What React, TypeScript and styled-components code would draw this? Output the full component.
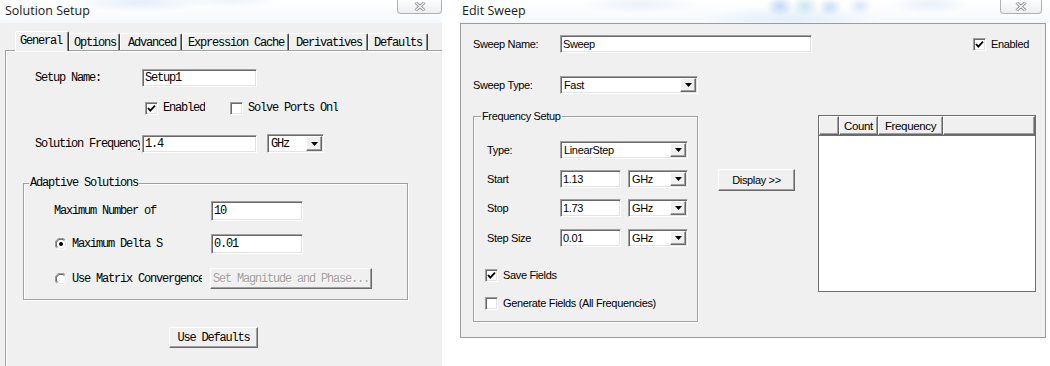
import React from "react";
import styled, { createGlobalStyle, css } from "styled-components";

const GlobalStyle = createGlobalStyle`
  html, body { margin: 0; padding: 0; background: #fff; }
  #root { width: 1050px; height: 366px; overflow: hidden; }
  * { box-sizing: border-box; }
`;

// classic 3D edges
const raised = css`
  border: 1px solid;
  border-color: #fff #696969 #696969 #fff;
  box-shadow: inset -1px -1px 0 #a0a0a0;
`;

const sunken = css`
  border: 1px solid;
  border-color: #a0a0a0 #fff #fff #a0a0a0;
  box-shadow: inset 1px 1px 0 #696969, inset -1px -1px 0 #e3e3e3;
`;

const Screen = styled.div`
  display: flex;
  width: 1050px;
  height: 366px;
  background: #fff;
`;

const Window = styled.div<{ $width: number; $offset?: number }>`
  width: ${(p) => p.$width}px;
  margin-left: ${(p) => p.$offset || 0}px;
  flex-shrink: 0;
  display: flex;
  flex-direction: column;
`;

const TitleBar = styled.div<{ $pad: number; $right: number; $glow: string }>`
  height: 23px;
  display: flex;
  align-items: flex-start;
  padding-left: ${(p) => p.$pad}px;
  padding-right: ${(p) => p.$right}px;
  background: ${(p) => p.$glow}, linear-gradient(#ffffff, #f6f9fc);
  font-family: "Open Sans", "Liberation Sans", sans-serif;
  font-size: 12.5px;
`;

const TitleText = styled.div`
  margin-top: 2px;
  line-height: 17px;
  color: #1b1b1b;
`;

const CloseButton = styled.div<{ $width: number }>`
  margin-left: auto;
  width: ${(p) => p.$width}px;
  height: 14px;
  border: 1px solid #aeb1b5;
  border-top: none;
  border-radius: 0 0 4px 4px;
  background: linear-gradient(#fdfdfd, #eceef0);
  display: flex;
  align-items: center;
  justify-content: center;
`;

/* ---------- Solution Setup ---------- */

const SetupBody = styled.div`
  height: 343px;
  background: #f0f0f0;
  display: flex;
  flex-direction: column;
  font-family: "Liberation Mono", "Noto Sans CJK SC", monospace;
  font-size: 12px;
  letter-spacing: -1.2px;
  color: #000;
`;

const TabStrip = styled.div`
  display: flex;
  align-items: flex-start;
  height: 22px;
  margin-top: 6px;
  margin-bottom: -1px;
  padding-left: 15px;
  position: relative;
  z-index: 1;
`;

const Tab = styled.div<{ $active?: boolean; $width: number; $pad: number }>`
  width: ${(p) => p.$width}px;
  height: ${(p) => (p.$active ? 20 : 17)}px;
  margin-top: ${(p) => (p.$active ? 2 : 4)}px;
  padding-left: ${(p) => p.$pad}px;
  padding-top: 3px;
  line-height: 13px;
  white-space: nowrap;
  background: #f0f0f0;
  border-top: 1px solid #fff;
  border-left: 1px solid #fff;
  border-right: 1px solid #3c3c3c;
  border-radius: 2px 2px 0 0;
  box-shadow: inset -1px 0 0 #8a8a8a;
`;

const Pane = styled.div`
  flex: 1;
  margin-left: 5px;
  border-top: 1px solid #a0a0a0;
  border-left: 1px solid #a0a0a0;
  box-shadow: inset 1px 1px 0 #fff;
  display: flex;
  flex-direction: column;
`;

const Row = styled.div<{ $top: number; $left: number }>`
  display: flex;
  align-items: center;
  margin-top: ${(p) => p.$top}px;
  padding-left: ${(p) => p.$left}px;
`;

const Label = styled.div<{ $width: number }>`
  width: ${(p) => p.$width}px;
  flex-shrink: 0;
  white-space: nowrap;
  overflow: hidden;
  line-height: 14px;
`;

const Field = styled.div<{ $width: number; $height: number; $gap?: number }>`
  ${sunken};
  width: ${(p) => p.$width}px;
  height: ${(p) => p.$height}px;
  margin-left: ${(p) => p.$gap || 0}px;
  background: #fff;
  padding: 0 2px;
  display: flex;
  align-items: center;
  white-space: nowrap;
  overflow: hidden;
  flex-shrink: 0;
`;

const Combo = styled.div<{ $width: number; $height: number; $gap?: number }>`
  ${sunken};
  width: ${(p) => p.$width}px;
  height: ${(p) => p.$height}px;
  margin-left: ${(p) => p.$gap || 0}px;
  background: #fff;
  padding: 1px;
  display: flex;
  flex-shrink: 0;
`;

const ComboText = styled.div`
  flex: 1;
  padding-left: 2px;
  display: flex;
  align-items: center;
  white-space: nowrap;
  overflow: hidden;
`;

const DropButton = styled.div`
  ${raised};
  width: 16px;
  background: #f0f0f0;
  display: flex;
  align-items: center;
  justify-content: center;
`;

const CheckItem = styled.div<{ $gap?: number }>`
  display: flex;
  align-items: center;
  margin-left: ${(p) => p.$gap || 0}px;
`;

const CheckBoxBox = styled.span`
  ${sunken};
  width: 13px;
  height: 13px;
  flex-shrink: 0;
  background: #fff;
  display: flex;
  align-items: center;
  justify-content: center;
`;

const CheckText = styled.span<{ $width?: number }>`
  margin-left: 5px;
  white-space: nowrap;
  overflow: hidden;
  line-height: 14px;
  flex-shrink: 0;
  ${(p) => (p.$width ? `width: ${p.$width}px;` : "")}
`;

const GroupBox = styled.fieldset<{ $left: number; $width: number }>`
  margin: 0 0 0 ${(p) => p.$left}px;
  padding: 0;
  width: ${(p) => p.$width}px;
  min-width: 0;
  border: 1px solid #a0a0a0;
  box-shadow: inset 1px 1px 0 #fff, 1px 1px 0 #fff;
`;

const Legend = styled.legend<{ $left: number }>`
  margin-left: ${(p) => p.$left}px;
  padding: 0 1px;
  line-height: 14px;
`;

const Radio = styled.span`
  width: 12px;
  height: 12px;
  flex-shrink: 0;
  display: flex;
`;

const Button = styled.div<{ $width: number; $height: number; $gap?: number; $disabled?: boolean }>`
  ${raised};
  width: ${(p) => p.$width}px;
  height: ${(p) => p.$height}px;
  margin-left: ${(p) => p.$gap || 0}px;
  background: #f0f0f0;
  display: flex;
  align-items: center;
  justify-content: center;
  white-space: nowrap;
  flex-shrink: 0;
  color: ${(p) => (p.$disabled ? "#a0a0a0" : "#000")};
  text-shadow: ${(p) => (p.$disabled ? "1px 1px 0 #fff" : "none")};
`;

/* ---------- Edit Sweep ---------- */

const SweepBody = styled.div`
  width: 586px;
  height: 315px;
  background: #f0f0f0;
  border: 1px solid #9c9c9c;
  display: flex;
  flex-direction: column;
  font-family: "Liberation Sans", Arial, sans-serif;
  font-size: 11px;
  letter-spacing: -0.35px;
  color: #000;
`;

const Lower = styled.div`
  display: flex;
  align-items: flex-start;
  margin-top: 15px;
`;

const Column = styled.div`
  display: flex;
  flex-direction: column;
  padding-bottom: 11px;
`;

const ListView = styled.div`
  width: 218px;
  height: 177px;
  margin: 6px 0 0 23px;
  border: 1px solid #6e6e6e;
  background: #fff;
  display: flex;
  flex-direction: column;
`;

const ListHeader = styled.div`
  display: flex;
  height: 20px;
  border-bottom: 1px solid #6e6e6e;
`;

const HeaderCell = styled.div<{ $width?: number }>`
  ${raised};
  ${(p) => (p.$width ? `width: ${p.$width}px;` : "flex: 1;")}
  background: #f0f0f0;
  display: flex;
  align-items: center;
  justify-content: center;
  font-size: 11.5px;
`;

/* ---------- small drawings ---------- */

const CloseGlyph = () => (
  <svg width="12" height="9" viewBox="0 0 12 9">
    <path d="M1.5 0.5 L10.5 8.5 M10.5 0.5 L1.5 8.5" stroke="#7f8388" strokeWidth="3" />
    <path d="M1.5 0.5 L10.5 8.5 M10.5 0.5 L1.5 8.5" stroke="#fdfdfd" strokeWidth="1.2" />
  </svg>
);

const Arrow = () => (
  <svg width="7" height="4" viewBox="0 0 7 4">
    <polygon points="0,0 7,0 3.5,4" fill="#000" />
  </svg>
);

const Check: React.FC<{ checked?: boolean; label: string; gap?: number; width?: number }> = ({
  checked,
  label,
  gap,
  width,
}) => (
  <CheckItem $gap={gap}>
    <CheckBoxBox>
      {checked && (
        <svg width="9" height="9" viewBox="0 0 9 9">
          <polyline points="1,4 3.3,6.6 8,1.6" fill="none" stroke="#000" strokeWidth="1.8" />
        </svg>
      )}
    </CheckBoxBox>
    <CheckText $width={width}>{label}</CheckText>
  </CheckItem>
);

const RadioDot: React.FC<{ checked?: boolean }> = ({ checked }) => (
  <Radio>
    <svg width="12" height="12" viewBox="0 0 12 12">
      <circle cx="6" cy="6" r="5.5" fill="#fff" />
      <path d="M1.8 10.2 A5.9 5.9 0 0 1 10.2 1.8" fill="none" stroke="#8a8a8a" strokeWidth="1" />
      <path d="M2.6 9.4 A4.8 4.8 0 0 1 9.4 2.6" fill="none" stroke="#4a4a4a" strokeWidth="1" />
      <path d="M10.2 1.8 A5.9 5.9 0 0 1 1.8 10.2" fill="none" stroke="#ffffff" strokeWidth="1" />
      <path d="M9.4 2.6 A4.8 4.8 0 0 1 2.6 9.4" fill="none" stroke="#e3e3e3" strokeWidth="1" />
      {checked && <circle cx="6" cy="6" r="2" fill="#000" />}
    </svg>
  </Radio>
);

const Select: React.FC<{ value: string; width: number; height: number; gap?: number }> = ({
  value,
  width,
  height,
  gap,
}) => (
  <Combo $width={width} $height={height} $gap={gap}>
    <ComboText>{value}</ComboText>
    <DropButton>
      <Arrow />
    </DropButton>
  </Combo>
);

const tabs = [
  { label: "General", width: 54, pad: 4, active: true },
  { label: "Options", width: 51, pad: 4 },
  { label: "Advanced", width: 62, pad: 7 },
  { label: "Expression Cache", width: 107, pad: 5 },
  { label: "Derivatives", width: 79, pad: 6 },
  { label: "Defaults", width: 60, pad: 5 },
];

const leftGlow =
  "radial-gradient(ellipse 70px 10px at 140px 2px, rgba(110,160,225,0.18), transparent)," +
  "radial-gradient(ellipse 50px 8px at 230px 0px, rgba(110,160,225,0.12), transparent)";

const rightGlow =
  "radial-gradient(ellipse 14px 10px at 320px 6px, rgba(70,130,220,0.3), transparent)," +
  "radial-gradient(ellipse 14px 10px at 345px 6px, rgba(80,170,200,0.28), transparent)," +
  "radial-gradient(ellipse 12px 9px at 370px 7px, rgba(70,140,220,0.28), transparent)," +
  "radial-gradient(ellipse 12px 9px at 400px 6px, rgba(90,150,225,0.22), transparent)," +
  "radial-gradient(ellipse 90px 12px at 330px 18px, rgba(120,170,230,0.16), transparent)," +
  "radial-gradient(ellipse 60px 10px at 180px 4px, rgba(120,170,230,0.14), transparent)," +
  "radial-gradient(ellipse 40px 10px at 470px 4px, rgba(120,170,230,0.16), transparent)";

const SolutionSetup = () => (
  <Window $width={442}>
    <TitleBar $pad={5} $right={0} $glow={leftGlow}>
      <TitleText>Solution Setup</TitleText>
      <CloseButton $width={45}>
        <CloseGlyph />
      </CloseButton>
    </TitleBar>
    <SetupBody>
      <TabStrip>
        {tabs.map((t) => (
          <Tab key={t.label} $active={t.active} $width={t.width} $pad={t.pad}>
            {t.label}
          </Tab>
        ))}
      </TabStrip>
      <Pane>
        <Row $top={18} $left={29}>
          <Label $width={107}>Setup Name:</Label>
          <Field $width={115} $height={18}>Setup1</Field>
        </Row>
        <Row $top={14} $left={139}>
          <Check checked label="Enabled" />
          <Check label="Solve Ports Only" gap={25} width={90} />
        </Row>
        <Row $top={19} $left={29}>
          <Label $width={105}>Solution Frequency</Label>
          <Field $width={115} $height={18} $gap={2}>1.4</Field>
          <Select value="GHz" width={57} height={19} gap={10} />
        </Row>
        <Row $top={23} $left={0}>
          <GroupBox $left={17} $width={385}>
            <Legend $left={5}>Adaptive Solutions</Legend>
            <Row $top={11} $left={30}>
              <Label $width={157}>Maximum Number of</Label>
              <Field $width={92} $height={20}>10</Field>
            </Row>
            <Row $top={13} $left={31}>
              <RadioDot checked />
              <CheckText $width={139}>Maximum Delta S</CheckText>
              <Field $width={92} $height={20}>0.01</Field>
            </Row>
            <Row $top={14} $left={31}>
              <RadioDot />
              <CheckText $width={130}>Use Matrix Convergence</CheckText>
              <Button $width={162} $height={21} $gap={8} $disabled>
                Set Magnitude and Phase...
              </Button>
            </Row>
            <Row $top={10} $left={0} />
          </GroupBox>
        </Row>
        <Row $top={27} $left={163}>
          <Button $width={89} $height={21}>Use Defaults</Button>
        </Row>
      </Pane>
    </SetupBody>
  </Window>
);

const EditSweep = () => (
  <Window $width={590} $offset={18}>
    <TitleBar $pad={2} $right={8} $glow={rightGlow}>
      <TitleText>Edit Sweep</TitleText>
      <CloseButton $width={42}>
        <CloseGlyph />
      </CloseButton>
    </TitleBar>
    <SweepBody>
      <Row $top={11} $left={12}>
        <Label $width={87}>Sweep Name:</Label>
        <Field $width={252} $height={18}>Sweep</Field>
        <Check checked label="Enabled" gap={161} />
      </Row>
      <Row $top={23} $left={12}>
        <Label $width={87}>Sweep Type:</Label>
        <Select value="Fast" width={138} height={18} />
      </Row>
      <Lower>
        <GroupBox $left={12} $width={225}>
          <Legend $left={7}>Frequency Setup</Legend>
          <Column>
            <Row $top={18} $left={13}>
              <Label $width={73}>Type:</Label>
              <Select value="LinearStep" width={128} height={18} />
            </Row>
            <Row $top={11} $left={13}>
              <Label $width={73}>Start</Label>
              <Field $width={61} $height={18}>1.13</Field>
              <Select value="GHz" width={60} height={18} gap={7} />
            </Row>
            <Row $top={11} $left={13}>
              <Label $width={73}>Stop</Label>
              <Field $width={61} $height={18}>1.73</Field>
              <Select value="GHz" width={60} height={18} gap={7} />
            </Row>
            <Row $top={12} $left={13}>
              <Label $width={73}>Step Size</Label>
              <Field $width={61} $height={18}>0.01</Field>
              <Select value="GHz" width={60} height={18} gap={7} />
            </Row>
            <Row $top={21} $left={11}>
              <Check checked label="Save Fields" />
            </Row>
            <Row $top={14} $left={11}>
              <Check label="Generate Fields (All Frequencies)" />
            </Row>
          </Column>
        </GroupBox>
        <Row $top={60} $left={20}>
          <Button $width={77} $height={22}>Display &gt;&gt;</Button>
        </Row>
        <ListView>
          <ListHeader>
            <HeaderCell $width={20} />
            <HeaderCell $width={39}>Count</HeaderCell>
            <HeaderCell $width={65}>Frequency</HeaderCell>
            <HeaderCell />
          </ListHeader>
        </ListView>
      </Lower>
    </SweepBody>
  </Window>
);

export default function App() {
  return (
    <>
      <GlobalStyle />
      <Screen>
        <SolutionSetup />
        <EditSweep />
      </Screen>
    </>
  );
}
